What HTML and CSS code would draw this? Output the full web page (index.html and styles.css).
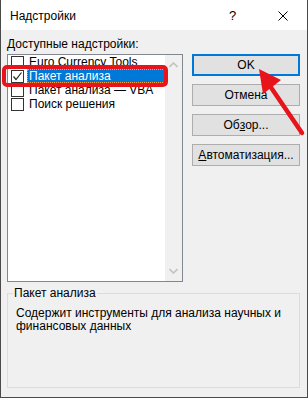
FILE: index.html
```html
<!DOCTYPE html>
<html lang="ru">
<head>
<meta charset="utf-8">
<link rel="stylesheet" href="styles.css">
</head>
<body>
<div class="window">
  <div class="titlebar">
    <span class="title">Надстройки</span>
    <span class="help">?</span>
    <svg class="close" width="10" height="10" viewBox="0 0 10 10"><path d="M0.5 0.5 L9.5 9.5 M9.5 0.5 L0.5 9.5" stroke="#000" stroke-width="1" fill="none"/></svg>
  </div>
  <div class="content">
    <div class="label"><u>Д</u>оступные надстройки:</div>
    <div class="main">
      <div class="listbox">
        <div class="items">
          <div class="item"><span class="cb"></span><span class="txt">Euro Currency Tools</span></div>
          <div class="item sel"><span class="cb checked"><svg width="11" height="11" viewBox="0 0 11 11"><path d="M1.5 5.5 L4 8.5 L9.5 1.5" stroke="#222" stroke-width="1.2" fill="none"/></svg></span><span class="txt">Пакет анализа</span></div>
          <div class="item"><span class="cb"></span><span class="txt">Пакет анализа — VBA</span></div>
          <div class="item"><span class="cb"></span><span class="txt">Поиск решения</span></div>
        </div>
        <div class="scroll">
          <svg width="9" height="6" viewBox="0 0 9 6"><path d="M0.5 5 L4.5 1 L8.5 5" stroke="#c2c2c2" stroke-width="1.6" fill="none"/></svg>
          <svg width="9" height="6" viewBox="0 0 9 6"><path d="M0.5 1 L4.5 5 L8.5 1" stroke="#c2c2c2" stroke-width="1.6" fill="none"/></svg>
        </div>
      </div>
      <div class="buttons">
        <div class="btn default">OK</div>
        <div class="btn">Отмена</div>
        <div class="btn">Об<u>з</u>ор...</div>
        <div class="btn"><u>А</u>втоматизация...</div>
      </div>
    </div>
    <div class="group">
      <div class="legend">Пакет анализа</div>
      <div class="desc">Содержит инструменты для анализа научных и финансовых данных</div>
    </div>
  </div>
  <div class="mark-rect"></div>
  <svg class="mark-arrow" width="308" height="398" viewBox="0 0 308 398">
    <path d="M302 133 L270 86" stroke="#e8141c" stroke-width="4.5" stroke-linecap="round" fill="none"/>
    <polygon points="259,69 281,80 263,94" fill="#e8141c"/>
  </svg>
</div>
</body>
</html>
```
FILE: styles.css
```css
* { box-sizing: border-box; }
html, body { margin: 0; padding: 0; background: #ffffff; }
body {
  font-family: "Liberation Sans", Arial, sans-serif;
  font-size: 12px;
  color: #000;
}
.window {
  position: relative;
  width: 308px;
  height: 398px;
  background: #f0f0f0;
  border: 1px solid #4a4a4a;
  border-top: none;
  overflow: hidden;
}
.titlebar {
  height: 30px;
  background: #fff;
  display: flex;
  align-items: center;
  padding-left: 9px;
  padding-top: 1px;
}
.title { flex: 1; font-size: 12px; }
.help { width: 10px; margin-right: 39px; font-size: 13px; }
.close { margin-right: 19px; }
.content {
  padding: 7px 0 0 6px;
}
.label { line-height: 15px; height: 15px; margin-bottom: 2px; }
.main { display: flex; gap: 9px; align-items: flex-start; }
.listbox {
  width: 176px;
  height: 228px;
  border: 1px solid #828790;
  background: #fff;
  display: flex;
}
.items { flex: 1; }
.item {
  height: 14px;
  display: flex;
  align-items: center;
  padding-left: 3px;
}
.cb {
  width: 13px;
  height: 13px;
  border: 1px solid #333;
  background: #fff;
  flex: none;
  display: flex;
  align-items: center;
  justify-content: center;
}
.txt {
  margin-left: 3px;
  line-height: 14px;
  padding-left: 2px;
  flex: 1;
  white-space: nowrap;
}
.sel .txt {
  background: #0078d7;
  color: #fff;
  outline: 1px dotted #f5a040;
  outline-offset: -1px;
}
.scroll {
  width: 17px;
  background: #f0f0f0;
  display: flex;
  flex-direction: column;
  justify-content: space-between;
  align-items: center;
  padding: 7px 0 7px;
}
.buttons { display: flex; flex-direction: column; gap: 8px; }
.btn {
  width: 108px;
  height: 22px;
  background: #e1e1e1;
  border: 1px solid #adadad;
  display: flex;
  align-items: center;
  justify-content: center;
}
.btn.default { border: 2px solid #0078d7; }
.group {
  position: relative;
  margin-top: 11px;
  width: 293px;
  height: 95px;
  border: 1px solid #dcdcdc;
}
.legend {
  position: absolute;
  top: -8px;
  left: 5px;
  background: #f0f0f0;
  padding: 0 1px;
  line-height: 14px;
}
.desc {
  padding: 13px 8px 0 8px;
  line-height: 13px;
}
.mark-rect {
  position: absolute;
  left: 1px;
  top: 65px;
  width: 166px;
  height: 22px;
  border: 4px solid #e8141c;
  border-radius: 5px;
}
.mark-arrow {
  position: absolute;
  left: -1px;
  top: 0;
}
```
